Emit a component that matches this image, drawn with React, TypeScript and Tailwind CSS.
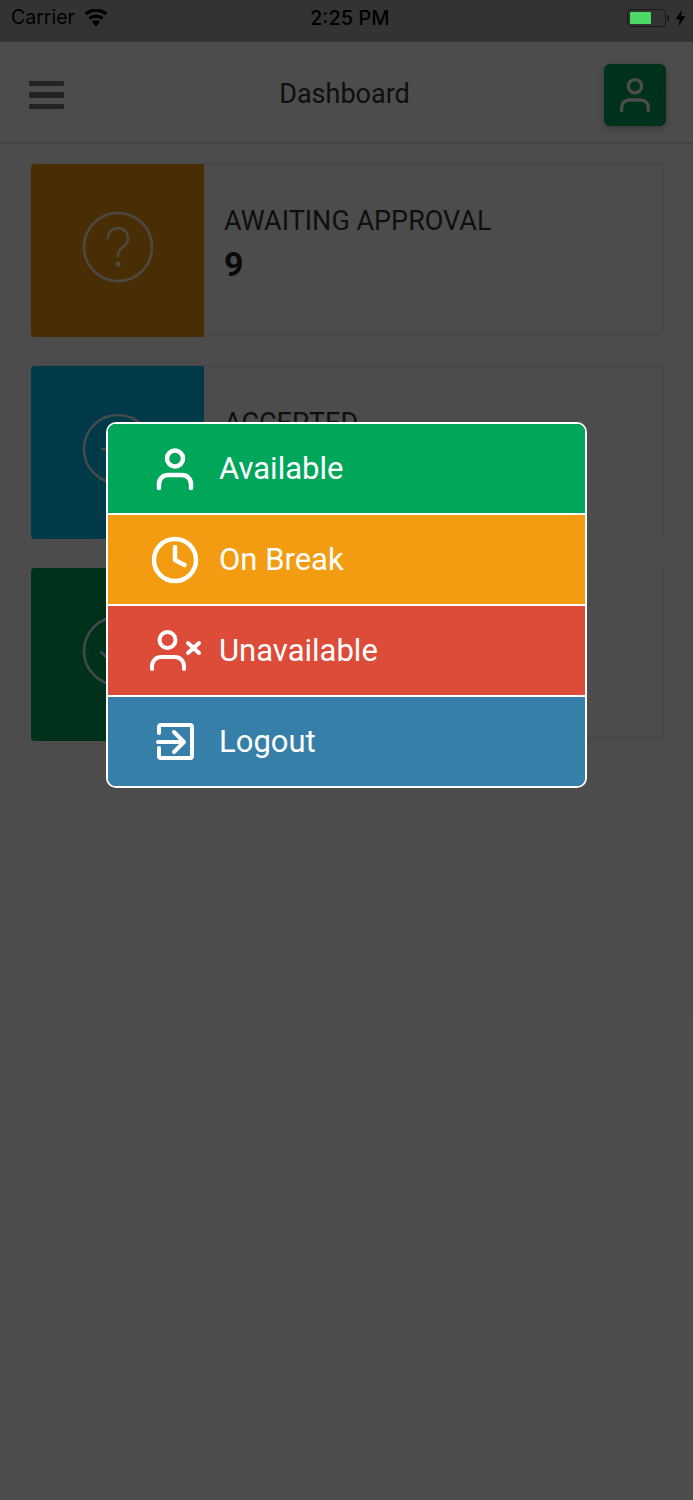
import type { ReactNode } from "react";

const font = { fontFamily: "Roboto, sans-serif" };

function StatusBar() {
  return (
    <div className="relative flex h-[42px] items-center justify-between bg-[#aaaaaa] pb-[6px] pl-[11px] pr-[7px] text-[#000]">
      <div className="flex items-center gap-[9px]">
        <span className="text-[19.500px] font-[Inter]">Carrier</span>
        <svg width="24" height="18" viewBox="0 0 25 18" fill="currentColor">
          <path d="M12.5 18l-4-5a6 6 0 0 1 8 0zM6.700 10.800L4.500 8.200a12.500 12.500 0 0 1 16 0l-2.200 2.600a9 9 0 0 0-11.600 0zM2.800 6.200L.5 3.600a18.500 18.500 0 0 1 24 0l-2.300 2.600a15 15 0 0 0-19.400 0z" />
        </svg>
      </div>
      <span className="absolute left-[310px] top-[3px] text-[20px] font-medium font-[Inter]">2:25 PM</span>
      <div className="flex items-center gap-[9px]">
        <div className="relative flex h-[18px] w-[39px] items-center rounded-[4px] border border-black/50 p-[2px]">
          <div className="relative z-10 h-[12px] w-[21px] rounded-[1px] bg-[#4cd964]" />
          <div className="absolute right-[-4px] h-[6px] w-[2px] rounded-r-[1px] bg-black/50" />
        </div>
        <svg width="11" height="16" viewBox="0 0 11 18" fill="currentColor">
          <path d="M7 0L0 10.500h4.500L3.500 18 11 7H6z" />
        </svg>
      </div>
    </div>
  );
}

function UserIcon({ size = 48, stroke = 3 }: { size?: number; stroke?: number }) {
  return (
    <svg width={size} height={size} viewBox="0 0 48 48" fill="none" stroke="currentColor" strokeWidth={stroke} strokeLinecap="round">
      <circle cx="24" cy="13.500" r="8" />
      <path d="M8 43v-4a9 9 0 0 1 9-9h14a9 9 0 0 1 9 9v4" />
    </svg>
  );
}

function Header() {
  return (
    <div className="flex h-[102px] items-center justify-between border-b-2 border-[#e2e2e2] bg-white pl-[29px] pr-[27px] pt-[6px]">
      <div className="flex w-[35px] flex-col gap-[6px]">
        <div className="h-[5.500px] rounded-[1px] bg-[#777]" />
        <div className="h-[5.500px] rounded-[1px] bg-[#777]" />
        <div className="h-[5.500px] rounded-[1px] bg-[#777]" />
      </div>
      <span className="-mt-[2px] ml-[21px] text-[27px] text-[#333]">Dashboard</span>
      <div className="flex h-[62px] w-[62px] items-center justify-center rounded-[6px] bg-[#00a65a] text-white shadow-[0_2px_6px_rgba(0,0,0,0.3)]">
        <UserIcon size={40} stroke={4} />
      </div>
    </div>
  );
}

function InfoCard({ color, label, value, icon }: { color: string; label?: string; value?: string; icon: ReactNode }) {
  return (
    <div className="flex h-[172px] rounded-[4px] border-2 border-[#efefef]">
      <div className={`-mb-[4px] -ml-[2px] -mt-[1px] flex w-[173px] shrink-0 items-center justify-center rounded-l-[4px] pb-[7px] text-white ${color}`}>
        {icon}
      </div>
      <div className="pl-[20px] pt-[38px]">
        <div className="text-[27px] leading-[36px] text-[#333]">{label}</div>
        <div className="mt-[5px] text-[34px] font-bold leading-[40px] text-[#222]">{value}</div>
      </div>
    </div>
  );
}

function TileIcon({ children }: { children: ReactNode }) {
  return (
    <svg width="72" height="72" viewBox="0 0 72 72" fill="none" stroke="currentColor" strokeWidth="2.500" strokeOpacity="0.9">
      <circle cx="36" cy="36" r="34" />
      {children}
    </svg>
  );
}

function MenuRow({ color, label, icon, last }: { color: string; label: string; icon: ReactNode; last?: boolean }) {
  return (
    <div className={`flex items-center gap-[20px] ${last ? "h-[89px]" : "h-[91px] border-b-2 border-white"} ${color}`}>
      <div className="flex w-[91px] items-center justify-end">{icon}</div>
      <span className="pt-[2px] text-[31px] text-white">{label}</span>
    </div>
  );
}

export default function App() {
  return (
    <div className="relative h-[1500px] w-[693px] overflow-hidden bg-white" style={font}>
      <StatusBar />
      <Header />
      <div className="flex flex-col gap-[30px] pl-[31px] pr-[29px] pt-[19px]">
        <InfoCard
          color="bg-[#f39c12]"
          label="AWAITING APPROVAL"
          value="9"
          icon={
            <TileIcon>
              <path d="M26 27a10 10 0 1 1 16 8c-4 3-6 5-6 10" strokeLinecap="round" />
              <circle cx="36" cy="53" r="2.500" fill="currentColor" stroke="none" />
            </TileIcon>
          }
        />
        <InfoCard
          color="bg-[#00c0ef]"
          label="ACCEPTED"
          icon={
            <TileIcon>
              <path d="M20 36h30M40 26l10 10-10 10" strokeLinecap="round" />
            </TileIcon>
          }
        />
        <InfoCard
          color="bg-[#00a65a]"
          icon={
            <TileIcon>
              <path d="M19 37l12 11 21-23" strokeLinecap="round" />
            </TileIcon>
          }
        />
      </div>

      <div className="absolute inset-0 bg-black/70 pl-[106px] pr-[106px] pt-[422px]">
        <div className="overflow-hidden rounded-[10px] border-2 border-white">
          <MenuRow
            color="bg-[#00a65a]"
            label="Available"
            icon={
              <div className="text-white">
                <UserIcon size={48} stroke={4.500} />
              </div>
            }
          />
          <MenuRow
            color="bg-[#f39c12]"
            label="On Break"
            icon={
              <svg width="48" height="48" viewBox="0 0 48 48" fill="none" stroke="white" strokeWidth="4.500" strokeLinecap="round" strokeLinejoin="round">
                <circle cx="24" cy="24" r="21" />
                <path d="M24 11v13l9.500 5" />
              </svg>
            }
          />
          <MenuRow
            color="bg-[#dd4b39]"
            label="Unavailable"
            icon={
              <svg className="-mr-[3px]" width="56" height="44" viewBox="0 0 56 44" fill="none" stroke="white" strokeWidth="4" strokeLinecap="round" strokeLinejoin="round">
                <circle cx="21.500" cy="11" r="8" />
                <path d="M6 40v-3a9 9 0 0 1 9-9h14a9 9 0 0 1 9 9v3M42 14l11 10M53 14L42 24" />
              </svg>
            }
          />
          <MenuRow
            color="bg-[#367fa9]"
            label="Logout"
            last
            icon={
              <svg width="48" height="48" viewBox="0 0 48 48" fill="none" stroke="white" strokeWidth="4" strokeLinecap="round" strokeLinejoin="round">
                <path d="M8 15V9a2 2 0 0 1 2-2h29a2 2 0 0 1 2 2v29a2 2 0 0 1-2 2H10a2 2 0 0 1-2-2v-8" />
                <path d="M7 24h25M23 14l10 10-10 10" />
              </svg>
            }
          />
        </div>
      </div>
    </div>
  );
}
